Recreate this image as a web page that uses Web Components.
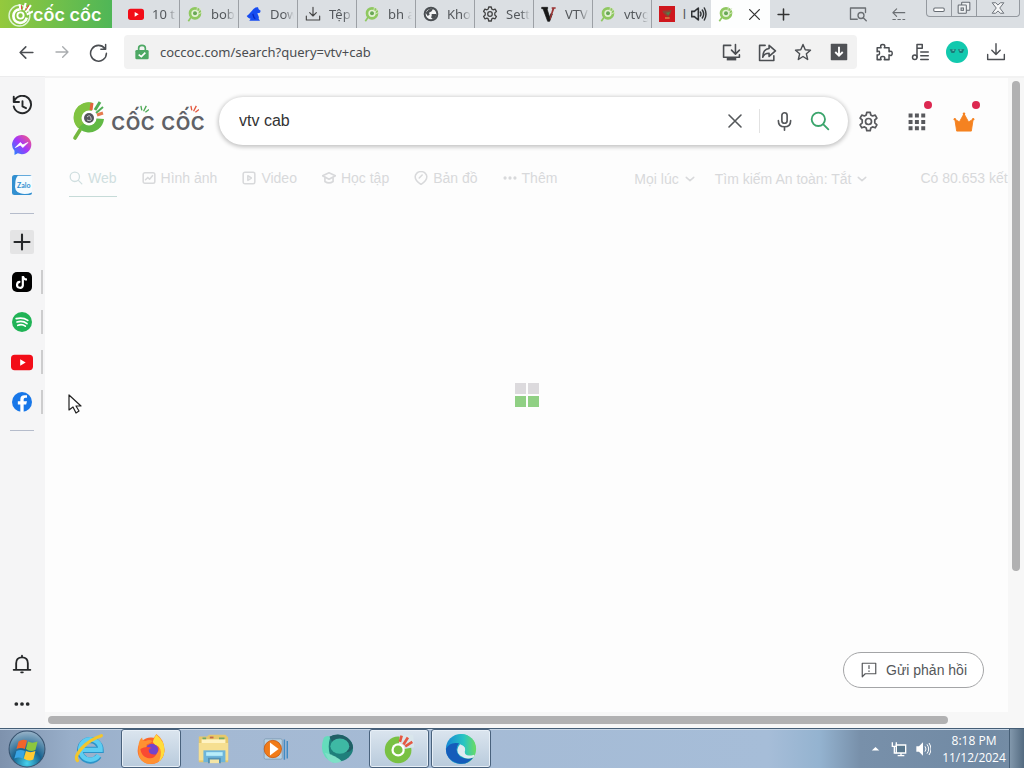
<!DOCTYPE html>
<html lang="vi">
<head>
<meta charset="utf-8">
<title>vtv cab - Cốc Cốc Search</title>
<style>
html, body { height: 100%; margin: 0; }
body { font-family: "Noto Sans", "Open Sans", sans-serif; font-size: 13px; color: #444; overflow: hidden; }
</style>
</head>
<body>
<cc-desktop></cc-desktop>
<script>
const line = (body, w = 1.7) => `<g fill="none" stroke="currentColor" stroke-width="${w}" stroke-linecap="round" stroke-linejoin="round">${body}</g>`;
const gearPath = 'M10.3 2.8h3.4l.6 2.7 1.7 1 2.7-.9 1.7 3-2.1 1.9v2.9l2.1 1.9-1.7 3-2.7-.9-1.7 1-.6 2.8h-3.4l-.6-2.8-1.7-1-2.7.9-1.7-3 2.1-1.9v-2.9L3.6 8.6l1.7-3 2.7.9 1.7-1z';
const ICONS = {
  youtube: ['0 0 24 24', '<rect x="0" y="4" width="24" height="17" rx="4" fill="#f20d18"/><path d="M10 9l6 3.500-6 3.500z" fill="#fff"/>'],
  coc: ['0 0 24 24', '<circle cx="12" cy="11" r="7.500" fill="#e4f0d4" stroke="#8fc860" stroke-width="4"/><circle cx="12" cy="11" r="3" fill="#69a857"/><path d="M6 17l-4 6" stroke="#8fc860" stroke-width="2.500"/><path d="M14 9l2-8M16 10l5-7M17 12l6-3" stroke="#d9e8c9" stroke-width="1.300"/>'],
  squirrel: ['0 0 24 24', '<path d="M1 15c3-2 5-5 8-8 2-3 6-6 9-5l1 3 3 2-1 3-4 1c1 3 3 5 2 8l2 3H5l2-3c-2 0-4-1-6-4z" fill="#174cf1"/><path d="M10 12c2 2 0 5 4 7" fill="none" stroke="#0827bf" stroke-width="2"/>'],
  download: ['0 0 24 24', line('<path d="M12 2v13M7 10l5 5 5-5M2 15v6h20v-6"/>')],
  globe: ['0 0 24 24', '<circle cx="12" cy="12" r="9.500" fill="#f3f4f5" stroke="#4a4e52" stroke-width="3"/><path d="M4 10l5-5 6-1-2 4-4 2 1 3-3 2zM13 12h7l-1 5-4 3-3-3 1-2z" fill="#4a4e52"/>'],
  gear: ['1.500 1.500 21 21', line(`<path d="${gearPath}"/><circle cx="12" cy="12" r="3"/>`, 1.7)],
  vletter: ['0 0 24 24', '<path d="M1 2h9v2H9l4 13 2-6 2 1-4 11h-3L3 4H1z" fill="#171717" stroke="#171717"/><path d="M16 2h6v2h-2l-6 17-1-3 4-14h-1z" fill="#9b3434"/>'],
  redstar: ['0 0 24 24', '<path d="M0 0h24v24H0z" fill="#cf171d"/><path d="M5 7l14-1-2 6-3 5-4-3-4-4z" fill="#8a4736"/><path d="M10 10l7-1-3 5z" fill="#52834b"/><path d="M9 18h7" stroke="#d9964a" stroke-width="2"/>'],
  speaker: ['0 0 24 24', '<path d="M1 8h4l6-5v18l-6-5H1z" fill="none" stroke="#303336" stroke-width="2.400" stroke-linejoin="round"/><path d="M14 9q2 3 0 6M17 6q4 6 0 12M20 3q5 9 0 18" fill="none" stroke="#303336" stroke-width="2.200" stroke-linecap="round"/>'],
  close: ['0 0 24 24', line('<path d="M3 3l18 18M21 3L3 21"/>', 2.4)],
  plus: ['0 0 24 24', line('<path d="M12 2v20M2 12h20"/>', 2.8)],
  tabsearch: ['0 0 24 24', line('<path d="M11 19H2V4h20v6"/><circle cx="16" cy="14" r="4"/><path d="M19 17l4 4"/>', 1.8)],
  dashback: ['0 0 24 24', line('<path d="M22 9H3M9 3L3 9l6 6"/><path d="M3 20h4M11 20h4M19 20h3"/>', 1.8)],
  back: ['0 0 24 24', line('<path d="M21 12H3M11 4l-8 8 8 8"/>', 2.2)],
  forward: ['0 0 24 24', line('<path d="M3 12h18M13 4l8 8-8 8"/>', 2)],
  reload: ['0 0 24 24', line('<path d="M20 7a10 10 0 1 0 2 6M21 2v6h-6"/>', 1.9)],
  lock: ['0 0 24 24', '<path d="M7 11V6q0-4 5-4t5 4v5" fill="none" stroke="#4da864" stroke-width="2.500"/><rect x="2" y="9" width="20" height="14" rx="2" fill="#4da864"/><path d="M7 16l4 3 6-6" fill="none" stroke="#fff" stroke-width="2.400"/>'],
  install: ['0 0 24 24', line('<path d="M11 3H2v15h20v-3M17 2v11M12 9l5 5 5-5"/>', 2) + '<path d="M6 18h12v4H6z" fill="currentColor"/>'],
  share: ['0 0 24 24', line('<path d="M9 3H2v19h18v-6"/><path d="M14 3l8 7-8 7v-4q-6 0-8 5 0-10 8-11z"/>', 2)],
  star: ['0 0 24 24', line('<path d="M12 2l3 7 7 .6-5.500 4.800L18.200 22 12 18l-6.200 4 1.700-7.600L2 9.600 9 9z"/>', 1.9)],
  downbox: ['0 0 24 24', '<rect x="1" y="1" width="22" height="22" rx="1" fill="#505256"/><path d="M12 5v12M7 12l5 5 5-5" fill="none" stroke="#fff" stroke-width="2.500"/>'],
  puzzle: ['0 0 24 24', line('<path d="M4 6h5q-2-4 2-4t2 4h6v5q4-2 4 2t-4 2v6h-6q2-4-2-4t-2 4H4v-6q3 1 3-2.500T4 11z"/>', 1.9)],
  music: ['0 0 24 24', line('<circle cx="5" cy="19" r="3"/><path d="M8 19V2h7v5H8M13 12h10M13 17h10M13 22h10"/>', 2)],
  avatar: ['0 0 24 24', '<circle cx="12" cy="12" r="12" fill="#12c9ae"/><path d="M4 9h7l-2 4H6zM13 9h7l-2 4h-3z" fill="#1b7b78"/><path d="M7 10h2M15 10h2" stroke="#8fe6d6"/>'],
  history: ['0 0 24 24', line('<path d="M3 6a10 10 0 1 1-1 7M2 2v6h6M12 7v6l4 2"/>', 2.2)],
  messenger: ['0 0 24 24', '<defs><linearGradient id="m" x1="0" y1="1" x2="1" y2="0"><stop offset="0" stop-color="#168dff"/><stop offset=".5" stop-color="#a436fa"/><stop offset="1" stop-color="#ff5d75"/></linearGradient></defs><path d="M12 0a11.500 11.500 0 1 1-5 22l-4 2v-5A11.500 11.500 0 0 1 12 0z" fill="url(#m)"/><path d="M4 15l6-6 3 3 6-3-6 6-3-3z" fill="#fff" stroke="#fff"/>'],
  zalo: ['0 0 24 24', '<rect width="24" height="24" rx="3" fill="#328fd0"/><path d="M7 1h17v20q-8 3-14 1-8-2-6-12 0-6 3-9z" fill="#f5fbff"/>'],
  tiktok: ['0 0 24 24', '<rect width="24" height="24" rx="6" fill="#000"/><path d="M13 5v11a3.500 3.500 0 1 1-3-4" fill="none" stroke="#fff" stroke-width="2.600"/><path d="M13 5q1 4 5 4" fill="none" stroke="#fff" stroke-width="2.600"/>'],
  spotify: ['0 0 24 24', '<circle cx="12" cy="12" r="12" fill="#20b356"/><path d="M5 8q8-2 14 2M6 12q7-2 12 2M7 16q5-2 9 1" fill="none" stroke="#fff" stroke-width="2" stroke-linecap="round"/>'],
  facebook: ['0 0 24 24', '<circle cx="12" cy="12" r="12" fill="#1877e8"/><path d="M10 24v-9H7v-4h3V9q0-5 5-5h3v3h-2q-2 0-2 2v2h4l-1 4h-3v9z" fill="#fff"/>'],
  bell: ['0 0 24 24', line('<path d="M2 19h20M5 18V11q0-7 7-7t7 7v7M12 2v2M11 22h2"/>', 2.2)],
  dots: ['0 0 24 24', '<g fill="currentColor"><circle cx="3.500" cy="12" r="2.800"/><circle cx="12" cy="12" r="2.800"/><circle cx="20.500" cy="12" r="2.800"/></g>'],
  mic: ['0 0 24 24', line('<rect x="9" y="2" width="6" height="12" rx="3"/><path d="M5 11q0 7 7 7t7-7M12 18v4"/>', 1.9)],
  search: ['0 0 24 24', line('<circle cx="10" cy="10" r="8"/><path d="M16 16l6 6"/>', 2.2)],
  apps: ['0 0 24 24', '<path fill="currentColor" d="M2 2h5v5H2zm8 0h5v5h-5zm8 0h5v5h-5zM2 10h5v5H2zm8 0h5v5h-5zm8 0h5v5h-5zM2 18h5v5H2zm8 0h5v5h-5zm8 0h5v5h-5z"/>'],
  crown: ['0 0 24 24', '<path d="M2 10l5 3 5-9 5 9 5-3-2 13H4z" fill="#f58220" stroke="#f58220" stroke-linejoin="round"/><circle cx="2" cy="10" r="1.300" fill="#f58220"/><circle cx="22" cy="10" r="1.300" fill="#f58220"/><circle cx="12" cy="4" r="1.400" fill="#f58220"/>'],
  image: ['0 0 24 24', line('<rect x="2" y="3" width="20" height="18" rx="3"/><path d="M6 15l4-4 3 3 5-6"/>', 2.6)],
  video: ['0 0 24 24', line('<rect x="2" y="2" width="20" height="20" rx="3"/><path d="M10 8l6 4-6 4z"/>', 2.6)],
  study: ['0 0 24 24', line('<path d="M1 8l11-5 11 5-11 6zM5 11v7q7 5 14 0v-7"/>', 2.8)],
  map: ['0 0 24 24', line('<path d="M12 23q-10-6-10-13a10 9 0 0 1 20 0q0 7-10 13zM9 12l5-5"/>', 2.6)],
  chevron: ['0 0 24 24', line('<path d="M3 8l9 8 9-8"/>', 3.6)],
  feedback: ['0 0 24 24', line('<path d="M3 3h18v14H7l-4 4zM12 6v4M12 13v1"/>', 1.6)],
  brand: ['0 0 34 42', '<path d="M21 3A15 15 0 1 0 32 19L18 18z" fill="#62b945"/><path d="M21 3A15 15 0 0 0 6 28L18 18z" fill="#80c341"/><path d="M8 30L3 38" stroke="#74b83f" stroke-width="3.600" stroke-linecap="round"/><circle cx="17" cy="18" r="7.500" fill="#fff"/><circle cx="17" cy="18" r="5" fill="#55565c"/><path d="M15 17q3-3 4 1t-4 2" fill="none" stroke="#c8c8ce" stroke-width="1"/><path d="M19 10l1-7" stroke="#e4633d" stroke-width="3"/><path d="M23 10l5-8" stroke="#51ae55" stroke-width="3"/><path d="M24 13l7-6" stroke="#51ae55" stroke-width="2"/><path d="M25 15l6-2" stroke="#e67a4e" stroke-width="3"/>'],
  brandwhite: ['0 0 24 24', '<circle cx="11" cy="13" r="10" fill="none" stroke="#dff4d5" stroke-width="1.400"/><path d="M11 7a6.500 6.500 0 1 0 7 8" fill="none" stroke="#fff" stroke-width="2.600"/><circle cx="12" cy="13" r="3" fill="none" stroke="#fff" stroke-width="1.800"/><path d="M12 8l-1-6M15 8l2-7M17 10l5-7M18 12l6-3" stroke="#fff" stroke-width="2"/><path d="M13 7V3M17 8l3-5" stroke="#e34d42"/>'],
  rays: ['0 0 10 10', '<path d="M2 6L1 1M4 7l3-6M6 8l4-3" stroke="currentColor" stroke-width="1.500"/>'],
  orb: ['0 0 36 36', '<defs><radialGradient id="o" cx=".5" cy=".9" r=".9"><stop offset="0" stop-color="#47d2ed"/><stop offset=".45" stop-color="#16628f"/><stop offset="1" stop-color="#9ab4c9"/></radialGradient></defs><circle cx="18" cy="18" r="17" fill="url(#o)" stroke="#38536f"/><path d="M10 11q4-3 8-1l-2 8q-4-2-8 0z" fill="#f0642b"/><path d="M19 11q4 2 9 0l-2 8q-5 2-9-1z" fill="#8cc63e"/><path d="M8 20q4-2 8 0l-2 7q-4-2-8 0z" fill="#39a5e5"/><path d="M17 20q4 2 9 0l-2 8q-5 2-9-1z" fill="#ffca32"/>'],
  ie: ['0 0 36 36', '<path d="M29 26a11.500 11.500 0 1 1 2-7H10" fill="none" stroke="#2b94c9" stroke-width="7"/><path d="M29 25a11.500 11.500 0 1 1 2-6H10" fill="none" stroke="#5ecdf2" stroke-width="5"/><path d="M5 31Q1 27 10 17T32 3" fill="none" stroke="#f3c62c" stroke-width="3.500" stroke-linecap="round"/>'],
  firefox: ['0 0 36 36', '<circle cx="18" cy="20" r="15" fill="#fb652a"/><path d="M4 15Q4 8 8 5q0 4 4 4 4-2 8 0-3 3-7 4 0 14 12 9 3-2 2-8-3-5-7-5 2-6 4-8 10 7 9 20-3 14-16 14Q2 34 4 15z" fill="#ff9132"/><path d="M20 10q2-6 4-8 10 8 9 19-1 7-6 11 5-12-1-17-4-1-6-5z" fill="#ffdc3a"/><circle cx="19" cy="19" r="7" fill="#7445cb"/><path d="M6 18q7-4 13-1-5 1-3 5 2 3 8 2-3 6-10 4-7-2-8-10z" fill="#fa4a32"/>'],
  explorer: ['0 0 36 36', '<path d="M2 5h9l2-2h18l3 3v27H2z" fill="#e6c86b"/><path d="M5 8h26v8H5z" fill="#fff3c3"/><path d="M2 12h32v19H2z" fill="#f6df91"/><path d="M7 20h24v13H7z" fill="#6eb5da"/><path d="M10 22h18v4H10z" fill="#b8edfa"/><path d="M13 34v-5h12v5" fill="#f4e5a5" stroke="#5491b3" stroke-width="2"/><path d="M6 7h4M24 7h6" stroke="#72a968" stroke-width="2"/><path d="M14 6h4" stroke="#c66a4a" stroke-width="2"/>'],
  player: ['0 0 36 36', '<rect x="3" y="4" width="25" height="28" rx="2" fill="#b9d2e2" stroke="#7896ae"/><path d="M31 5v28M35 7v24" stroke="#418bc3" stroke-width="2"/><circle cx="15" cy="18" r="12" fill="#f17b18" stroke="#c2520c"/><path d="M11 9l12 9-12 9z" fill="#fff"/>'],
  ball: ['0 0 36 36', '<ellipse cx="19" cy="17" rx="16" ry="14" fill="#1f7f7b"/><path d="M4 6Q-3 26 15 33 6 20 11 5 7 3 4 6z" fill="#65dcbc"/><path d="M10 5q10-5 19 1 6 5 6 11-4 6-11 4T10 5z" fill="#205f66"/><ellipse cx="21" cy="15" rx="10" ry="8" fill="#3eb9a4"/><path d="M5 22q12 3 18 9-8 4-14-1z" fill="#7ee0c6"/>'],
  coctask: ['0 0 36 36', '<circle cx="17" cy="19" r="15" fill="#79c143"/><path d="M17 19L19 2h15l1 14z" fill="#d9e6ec"/><circle cx="17" cy="19" r="7.500" fill="#fff"/><circle cx="17" cy="19" r="5" fill="#79c143"/><path d="M19 10l2-7M23 13l5-8M25 15l8-5" stroke="#e55843" stroke-width="3"/>'],
  edge: ['0 0 36 36', '<defs><linearGradient id="e" x1="0" y1="0" x2="1" y2="0"><stop offset="0" stop-color="#1689d5"/><stop offset=".6" stop-color="#28c5c2"/><stop offset="1" stop-color="#69da65"/></linearGradient></defs><circle cx="18" cy="18" r="16" fill="url(#e)"/><path d="M2 18q4-8 14-6-6 7 1 14 6 4 14 1-7 9-17 6Q2 29 2 18z" fill="#155cba"/><path d="M17 13q-6 7 0 12 7 5 14 2 2-2 1-3-10 3-10-3 3-5-5-8z" fill="#dfeaf1"/><path d="M3 15Q8 7 17 11q7 4 5 10 7 2 11-2 1-8-4-12Q20-2 8 7q-4 4-5 8z" fill="url(#e)"/>'],
  traytri: ['0 0 24 24', '<path d="M2 17L12 8l10 9z" fill="#fff"/>'],
  network: ['0 0 24 24', '<path d="M8 6h14v12H8z" fill="#5a788e" stroke="#fff" stroke-width="2"/><path d="M10 22h10M15 18v4M2 2v6h6V2M5 8v10h3" fill="none" stroke="#fff" stroke-width="2"/>'],
  volume: ['0 0 24 24', '<path d="M2 8h4l6-6v20l-6-6H2z" fill="#fff"/><path d="M15 8q3 4 0 8M18 5q5 7 0 14M21 3q6 9 0 18" fill="none" stroke="#fff" stroke-width="1.500"/>'],
  minimize: ['0 0 24 24', '<rect x="3" y="12" width="18" height="6" rx="2" fill="#fff" stroke="#666c73" stroke-width="1.800"/>'],
  restore: ['0 0 24 24', '<g fill="#eef0f2" stroke="#666c73" stroke-width="1.800"><rect x="8" y="2" width="14" height="14" rx="1"/><rect x="2" y="7" width="14" height="14" rx="1"/><rect x="7" y="12" width="4" height="4"/></g>'],
  winclose: ['0 0 24 24', '<path d="M2 3h6l4 4 4-4h6l-7 9 7 9h-6l-4-4-4 4H2l7-9z" fill="#f5f6f7" stroke="#666c73" stroke-width="1.600"/>'],
  cursor: ['0 0 14 20', '<path d="M1 1v15l4-3 3 6 3-2-3-5h5z" fill="#fff" stroke="#222" stroke-width="1.200" stroke-linejoin="round"/>']
};

function define(name, css, render) {
  customElements.define(name, class extends HTMLElement {
    connectedCallback() {
      if (this.shadowRoot) return;
      const template = document.createElement('template');
      template.innerHTML = `<style>*{box-sizing:border-box}button{font:inherit;color:inherit;background:none;border:0;padding:0;display:flex;align-items:center;justify-content:center}${css}</style>${typeof render === 'function' ? render(this) : render}`;
      this.attachShadow({ mode: 'open' }).append(template.content.cloneNode(true));
    }
  });
}
const icon = (name, size = 20) => `<cc-icon name="${name}" size="${size}"></cc-icon>`;
const button = (name, label, size = 20, cls = '') => `<button type="button" class="${cls}" aria-label="${label}">${icon(name, size)}</button>`;

define('cc-icon', ':host{display:block;flex:none}svg{display:block}', el => {
  const [box, body] = ICONS[el.getAttribute('name')];
  const w = el.getAttribute('size'), h = el.getAttribute('height') || w;
  return `<svg viewBox="${box}" width="${w}" height="${h}" aria-hidden="true">${body}</svg>`;
});

define('cc-tab', `
:host{display:block;width:59px;flex:none;border-right:1px solid #9ca0a5}
:host([active]){background:#fdfefe;border-color:transparent;color:#333}
:host([last]){border-color:transparent}
button{width:100%;height:28px;padding:0 3px 0 7px;justify-content:flex-start;gap:8px}
:host([active]) button{gap:14px}
:host([audio]) button{gap:5px}
:host([audio]) span{text-align:right;-webkit-mask-image:none}
span{flex:1;min-width:0;overflow:hidden;white-space:nowrap;text-align:left;color:#54585c;-webkit-mask-image:linear-gradient(90deg,#000 60%,transparent)}`,
  el => `<button type="button" role="tab" aria-label="${el.getAttribute('hint')}">${icon(el.getAttribute('icon'), 16)}${el.hasAttribute('active') ? icon('close', 13) : '<span><slot></slot></span>'}${el.hasAttribute('audio') ? icon('speaker', 16) : ''}</button>`);

define('cc-tabbar', `
:host{display:flex;height:28px;background:#dbdfe3;flex:none}
.brand{width:112px;margin-right:9px;padding-left:8px;display:flex;align-items:center;background:linear-gradient(90deg,#94c93d,#4fb657);color:#fff;font:600 18px Inter,sans-serif;flex:none}
nav{display:flex}
.new{width:26px;color:#333}
.right{display:flex;margin-left:auto;color:#6a6e72}
.tool{width:40px;height:28px}
.win{display:flex;height:17px;margin:0 4px 0 8px;border:1px solid #94999f;border-top:0;border-radius:0 0 4px 4px}
.win button{width:25px;border-right:1px solid #94999f}
.win button:last-child{width:42px;border:0}`, `
<div class="brand">${icon('brandwhite', 25)}<span>cốc cốc</span></div>
<nav role="tablist">
<cc-tab icon="youtube" hint="YouTube">10 t</cc-tab><cc-tab icon="coc" hint="bob">bob</cc-tab><cc-tab icon="squirrel" hint="Download">Dow</cc-tab><cc-tab icon="download" hint="Tệp">Tệp</cc-tab><cc-tab icon="coc" hint="bh">bh a</cc-tab><cc-tab icon="globe" hint="Kho">Kho</cc-tab><cc-tab icon="gear" hint="Settings">Sett</cc-tab><cc-tab icon="vletter" hint="VTV">VTV</cc-tab><cc-tab icon="coc" hint="vtv">vtvg</cc-tab><cc-tab icon="redstar" hint="Live" audio last>l</cc-tab><cc-tab icon="coc" hint="vtv cab" active></cc-tab>
</nav>
${button('plus', 'Tab mới', 13, 'new')}
<div class="right">${button('tabsearch', 'Tìm tab', 18, 'tool')}${button('dashback', 'Mở lại tab', 15, 'tool')}
<div class="win">${button('minimize', 'Thu nhỏ', 14)}${button('restore', 'Khôi phục', 14)}${button('winclose', 'Đóng', 14)}</div></div>`);

define('cc-toolbar', `
:host{display:flex;align-items:center;height:48px;padding:0 8px;background:#fff;flex:none;color:#4b4e52}
button{width:36px;height:36px;flex:none}
.dim{color:#a9acaf}
.address{display:flex;align-items:center;flex:1;height:34px;margin:0 8px;background:#f2f2f2;border-radius:4px;padding-left:10px;min-width:0}
input{flex:1;min-width:0;margin-left:10px;padding:0;border:0;outline:0;background:none;font:13px "Noto Sans",sans-serif;color:#4a4d50}
.extensions{display:flex;gap:1px}
.extensions button:last-child{width:40px}`, `
${button('back', 'Quay lại', 17)}${button('forward', 'Tiến', 16, 'dim')}${button('reload', 'Tải lại', 19)}
<div class="address">${icon('lock', 16)}<input aria-label="Địa chỉ" value="coccoc.com/search?query=vtv+cab">
${button('install', 'Cài đặt ứng dụng', 19)}${button('share', 'Chia sẻ', 19)}${button('star', 'Đánh dấu', 18)}${button('downbox', 'Tải xuống video', 18)}</div>
<div class="extensions">${button('puzzle', 'Tiện ích', 19)}${button('music', 'Âm nhạc', 18)}${button('avatar', 'Hồ sơ', 22)}${button('download', 'Tải xuống', 20)}</div>`);

define('cc-sidebar', `
:host{display:flex;flex-direction:column;align-items:center;width:45px;flex:none;padding:8px 1px 4px 0;background:#f5f5f6;color:#26282a;border-top:1px solid #ececed}
button{width:44px;height:40px;flex:none}
hr{width:24px;height:1px;margin:8px 0;border:0;background:#b5bccb}
.pin{position:relative}
.pin::after{content:"";position:absolute;right:1px;top:8px;width:2px;height:24px;background:#cdcdce}
.add i{display:grid;place-items:center;width:24px;height:24px;background:#e4e4e5;border-radius:2px}
.zalo{position:relative}
.zalo span{position:absolute;left:17px;font:700 7px Lato,sans-serif;color:#328fd0}
.grow{flex:1}`, `
${button('history', 'Lịch sử', 21)}${button('messenger', 'Messenger', 20)}
<button type="button" class="zalo" aria-label="Zalo">${icon('zalo', 20)}<span>Zalo</span></button><hr>
<button type="button" class="add" aria-label="Thêm"><i>${icon('plus', 18)}</i></button>
${button('tiktok', 'TikTok', 20, 'pin')}${button('spotify', 'Spotify', 20, 'pin')}${button('youtube', 'YouTube', 22, 'pin')}${button('facebook', 'Facebook', 20, 'pin')}<hr>
<div class="grow"></div>${button('bell', 'Thông báo', 20)}${button('dots', 'Khác', 16)}`);

define('cc-search-header', `
:host{display:flex;align-items:center;height:48px;margin-top:19px;padding-left:27px}
.logo{display:flex;align-items:center;width:147px;flex:none;color:#606167;font:500 25px/32px Inter,sans-serif}
.word{margin-left:5px;display:flex;gap:6px}
.word span{position:relative}
.word cc-icon{position:absolute;right:6px;top:0;color:#4da955}
.word span:last-child cc-icon{color:#e4573d}
form{display:flex;align-items:center;flex:1;min-width:0;height:48px;padding:0 10px 0 20px;border-radius:24px;background:#fff;box-shadow:0 1px 4px 1px #0000003d;color:#55585b}
input{flex:1;min-width:0;border:0;outline:0;padding:0;background:none;font:16px "Liberation Sans",sans-serif;color:#333}
form button{width:36px;height:40px}
.clear{width:48px}
.rule{width:1px;height:24px;background:#e2e2e2;margin-right:6px}
.find{color:#3ba56c}
.tools{display:flex;padding-right:20px;color:#58595d}
.tools button{width:48px;height:48px;position:relative}
.tools button:first-child{width:40px;margin-right:4px}
.badge::after{content:"";position:absolute;right:8px;top:4px;width:8px;height:8px;border-radius:50%;background:#dc2850}`, `
<div class="logo"><cc-icon name="brand" size="34" height="42"></cc-icon><span class="word"><span>cốc${icon('rays', 9)}</span><span>cốc${icon('rays', 9)}</span></span></div>
<form role="search" onsubmit="return false"><input aria-label="Tìm kiếm" value="vtv cab">
${button('close', 'Xóa', 16, 'clear')}<span class="rule"></span>${button('mic', 'Giọng nói', 21)}${button('search', 'Tìm', 20, 'find')}</form>
<div class="tools">${button('gear', 'Cài đặt', 21)}${button('apps', 'Ứng dụng', 19, 'badge')}${button('crown', 'Phần thưởng', 22, 'badge')}</div>`);

define('cc-filters', `
:host{display:flex;align-items:flex-start;height:38px;margin-top:14px;padding-left:24px;font:14px/20px "Liberation Sans",sans-serif;color:#d8d9db;white-space:nowrap;overflow:hidden}
nav{display:flex;gap:25px;flex:none}
a{display:flex;align-items:center;gap:5px;height:37px;color:inherit;text-decoration:none}
a:first-child{box-shadow:0 1px #c6dbd8;color:#d0dfe0}
.options{display:flex;margin-left:77px;flex:none}
button{height:39px;gap:6px;margin-right:20px}
.count{line-height:39px;margin-left:33px}`, `
<nav><a href="#web">${icon('search', 14)}Web</a><a href="#images">${icon('image', 14)}Hình ảnh</a><a href="#video">${icon('video', 14)}Video</a><a href="#study">${icon('study', 14)}Học tập</a><a href="#maps">${icon('map', 14)}Bản đồ</a><a href="#more">${icon('dots', 14)}Thêm</a></nav>
<div class="options"><button type="button">Mọi lúc ${icon('chevron', 10)}</button><button type="button">Tìm kiếm An toàn: Tắt ${icon('chevron', 10)}</button><span class="count">Có 80.653 kết quả</span></div>`);

define('cc-loader', `
:host{position:absolute;inset:0;display:grid;place-content:center;grid-template-columns:11px 11px;grid-auto-rows:11px;gap:2px;pointer-events:none}
i{background:#dcdadd}
i:nth-of-type(n+3){background:#90d084}`, '<i></i><i></i><i></i><i></i>');

define('cc-feedback', `
:host{position:absolute;right:24px;bottom:24px}
button{height:36px;padding:0 16px;gap:8px;border:1px solid #a4a5a7;border-radius:18px;background:#fff;color:#55575a;font:14px "Liberation Sans",sans-serif}`,
  `<button type="button">${icon('feedback', 18)}<slot></slot></button>`);

define('cc-results', `
:host{display:grid;grid-template:minmax(0,1fr) 16px / minmax(0,1fr) 16px;flex:1;min-width:0;background:#f7f7f7;border-top:2px solid #f2f2f2}
main{position:relative;background:#fdfdfd;overflow:hidden}
.v{padding:3px 4px}
.v i,.h i{display:block;border-radius:4px;background:#b1b1b2}
.v i{height:78%}
.h{padding:4px 3px}
.h i{height:8px;width:94%}`, `
<main><cc-search-header></cc-search-header><cc-filters></cc-filters><cc-loader></cc-loader><cc-feedback>Gửi phản hồi</cc-feedback></main>
<div class="v"><i></i></div><div class="h"><i></i></div>`);

define('cc-taskbar', `
:host{display:flex;height:40px;flex:none;border-top:1px solid #455e76;box-shadow:inset 0 1px #c8d7e7;background:linear-gradient(90deg,#7e92ad 0,#99afca 7%,#a4b9d3 20%,#a6bdd8 75%,#94b3d0 80%,#7890aa 84%,#718aa4 96%,#768da5)}
.start{width:54px;margin-right:5px}
nav{display:flex;gap:2px}
nav button{width:60px;height:39px;border-radius:3px}
.open{border:1px solid #49627d;box-shadow:inset 0 0 0 1px #e7eff7;background:linear-gradient(#dbe5ef,#b9cbdc)}
.tray{display:flex;align-items:center;margin-left:auto}
.tray>button{width:24px;height:30px}
time{width:70px;margin-left:4px;text-align:center;color:#fff;font:12px/17px "Open Sans",sans-serif;white-space:pre}
.tray>.show{width:15px;height:39px;border-left:1px solid #465e76;background:linear-gradient(90deg,#8298ac,#536a80)}`, `
${button('orb', 'Start', 38, 'start')}
<nav>${button('ie', 'Internet Explorer', 32)}${button('firefox', 'Firefox', 32, 'open')}${button('explorer', 'Explorer', 33)}${button('player', 'Media Player', 26)}${button('ball', 'Trình duyệt', 34)}${button('coctask', 'Cốc Cốc', 32, 'open')}${button('edge', 'Edge', 34, 'open')}</nav>
<div class="tray">${button('traytri', 'Biểu tượng ẩn', 9)}${button('network', 'Mạng', 16)}${button('volume', 'Âm lượng', 16)}
<time datetime="2024-11-12T20:18">8:18 PM
11/12/2024</time><button type="button" class="show" aria-label="Hiện màn hình"></button></div>`);

define('cc-desktop', `
:host{display:flex;flex-direction:column;height:100vh;position:relative}
.body{display:flex;flex:1;min-height:0}
.pointer{position:absolute;left:68px;top:394px;pointer-events:none}`, `
<cc-tabbar></cc-tabbar><cc-toolbar></cc-toolbar>
<div class="body"><cc-sidebar></cc-sidebar><cc-results></cc-results></div>
<cc-taskbar></cc-taskbar>
<cc-icon class="pointer" name="cursor" size="14" height="20"></cc-icon>`);
</script>
</body>
</html>
